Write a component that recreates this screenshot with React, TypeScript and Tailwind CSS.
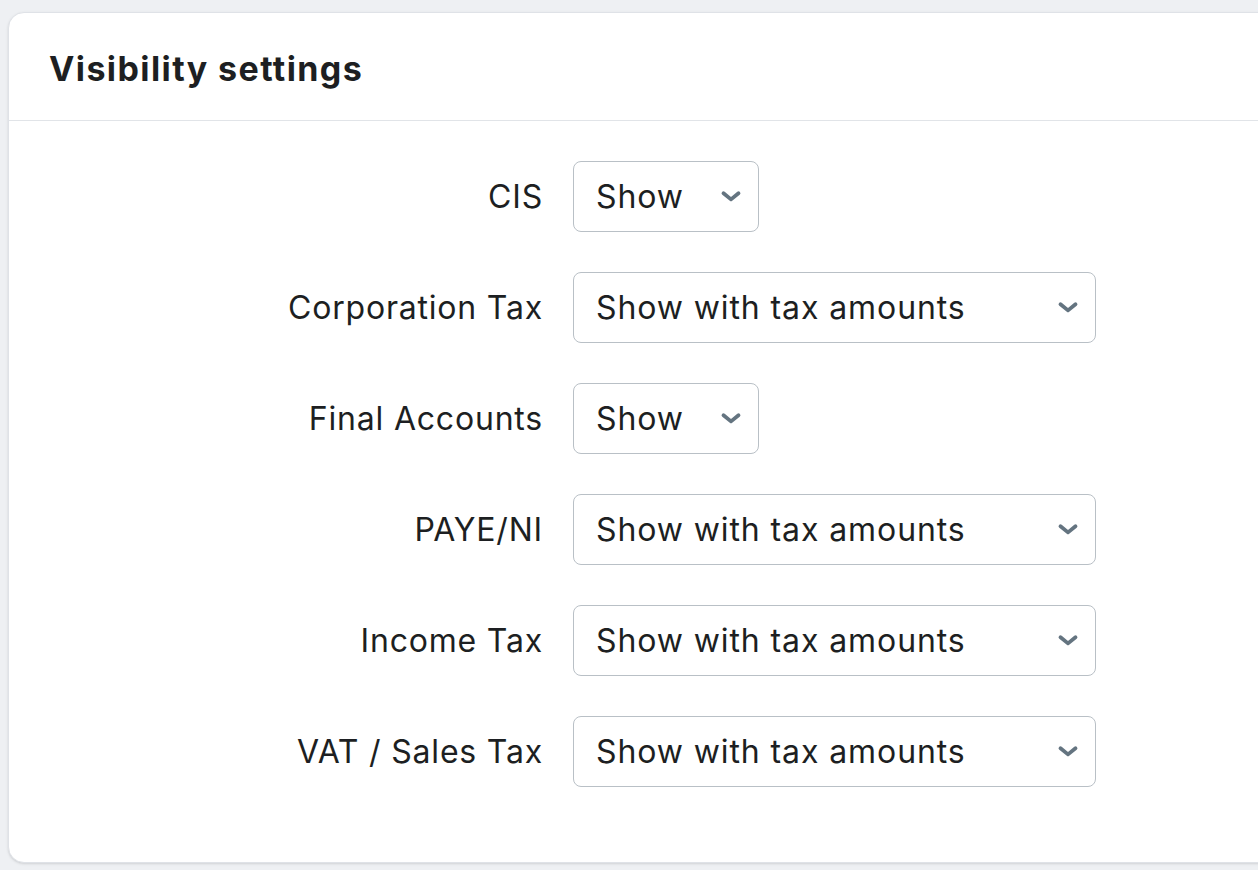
const ROWS = [
  { label: 'CIS', value: 'Show', wide: false },
  { label: 'Corporation Tax', value: 'Show with tax amounts', wide: true },
  { label: 'Final Accounts', value: 'Show', wide: false },
  { label: 'PAYE/NI', value: 'Show with tax amounts', wide: true },
  { label: 'Income Tax', value: 'Show with tax amounts', wide: true },
  { label: 'VAT / Sales Tax', value: 'Show with tax amounts', wide: true },
];

const Chevron = () => (
  <svg width="22" height="13" viewBox="0 0 22 13" fill="none" className="shrink-0">
    <path d="M3.5 3.2 11 9.4 18.5 3.2" stroke="#647480" strokeWidth="3.8" strokeLinecap="round" strokeLinejoin="round" />
  </svg>
);

const App = () => {
  return (
    <div className="w-[1258px] h-[870px] overflow-hidden bg-[#eef0f3] pl-2 pt-3 font-['Inter',sans-serif] text-[#1d1f22]">
      <div className="w-[1290px] h-[851px] bg-white rounded-2xl border border-[#dfe2e7] shadow-sm">
        <div className="h-[108px] border-b border-[#e1e4e8] flex items-center pl-10 pt-1">
          <h2 className="text-[34px] font-bold tracking-[1.4px]">Visibility settings</h2>
        </div>
        <div className="flex flex-col gap-10 pt-10">
          {ROWS.map((row) => (
            <div key={row.label} className="flex items-center gap-[30px]">
              <div className="w-[534px] text-right text-[32px] tracking-[0.8px]">{row.label}</div>
              <div
                className={`${row.wide ? 'w-[523px]' : 'w-[186px]'} h-[71px] border border-[#b9c0c6] rounded-lg flex items-center justify-between pl-[22px] pr-[16px]`}
              >
                <span className="text-[32px] tracking-[0.9px]">{row.value}</span>
                <Chevron />
              </div>
            </div>
          ))}
        </div>
      </div>
    </div>
  );
};

export default App;
